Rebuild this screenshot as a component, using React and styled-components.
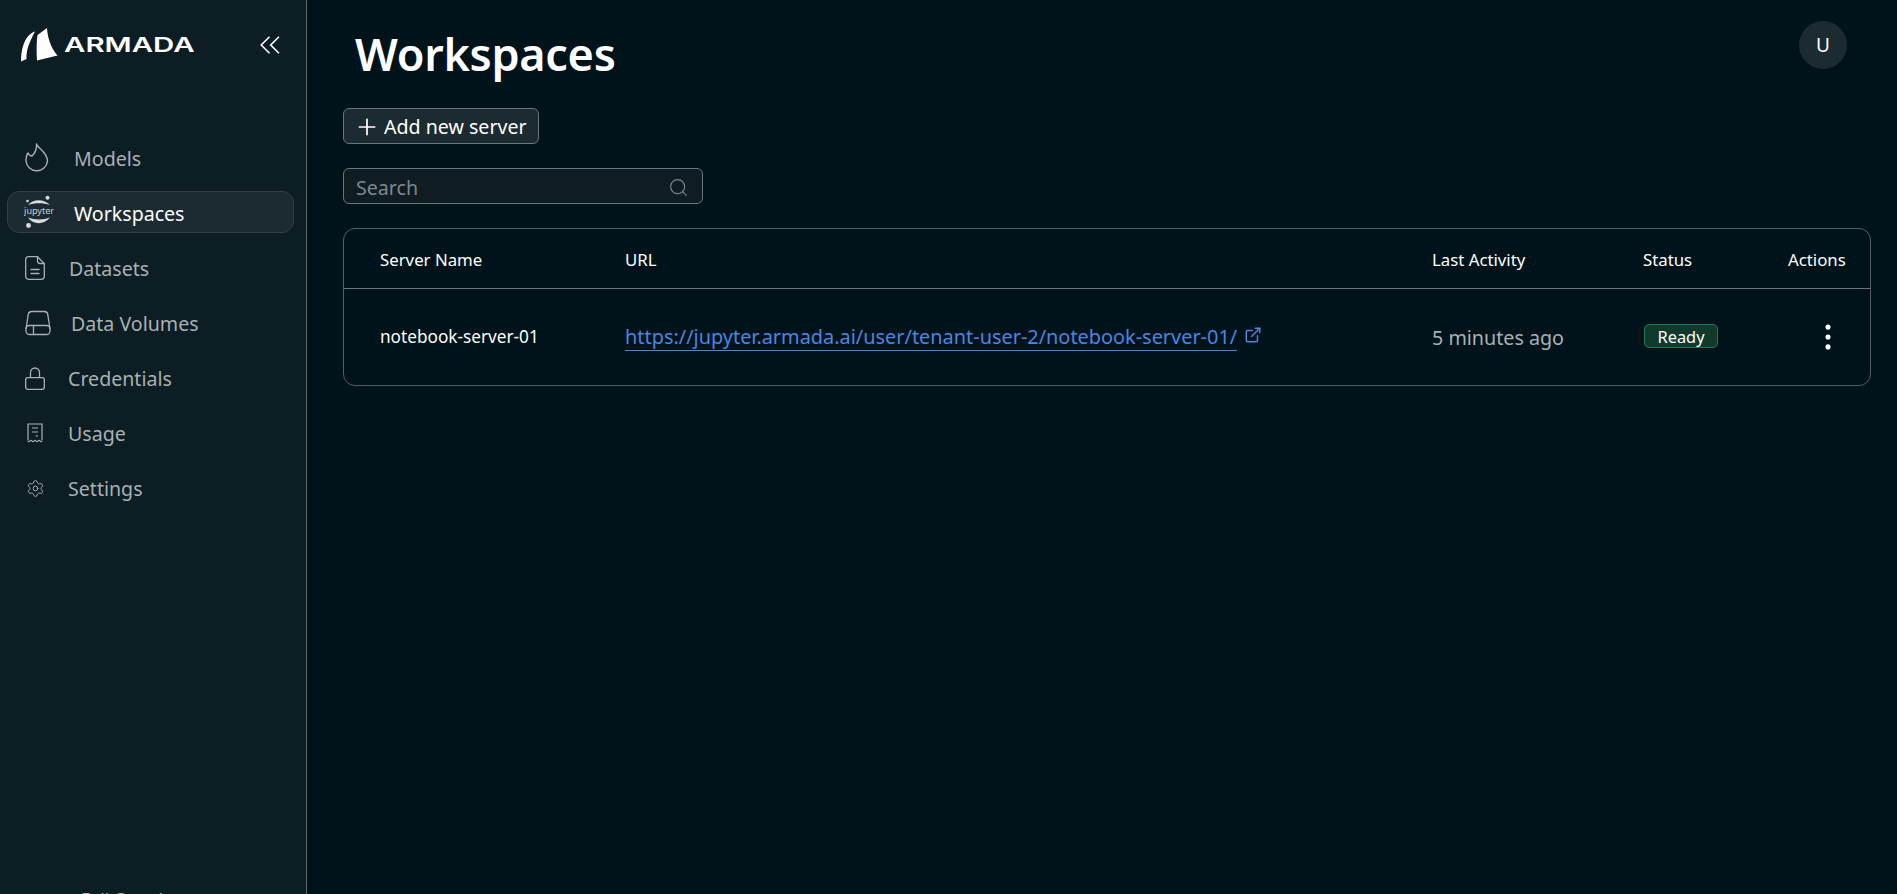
import React from 'react';
import styled, { createGlobalStyle } from 'styled-components';
import { Plus, Search, ExternalLink, Settings, EllipsisVertical } from 'lucide-react';

const Global = createGlobalStyle`
  html, body { margin: 0; padding: 0; height: 100%; background: #00131a; overflow: hidden; }
  * { box-sizing: border-box; }
  body { font-family: "Noto Sans", "Open Sans", sans-serif; }
`;

const Shell = styled.div`
  display: flex;
  width: 1897px;
  height: 894px;
  overflow: hidden;
  background: #00131a;
`;

const Sidebar = styled.aside`
  flex: 0 0 307px;
  height: 894px;
  background: #0d1d24;
  border-right: 1px solid #5c6669;
  display: flex;
  flex-direction: column;
  position: relative;
  overflow: hidden;
`;

const Brand = styled.div`
  height: 136px;
  padding: 28px 26px 0 20px;
  display: flex;
  align-items: flex-start;
  justify-content: space-between;
`;

const Logo = styled.div`
  display: flex;
  align-items: center;
  gap: 6px;
`;

const Wordmark = styled.span`
  display: inline-block;
  font-family: "Inter", sans-serif;
  font-weight: 600;
  font-size: 20px;
  line-height: 33px;
  color: #fff;
  transform: scaleX(1.47);
  transform-origin: left center;
`;

const Collapse = styled.button`
  all: unset;
  display: flex;
  color: #fff;
  margin-top: 8px;
`;

const Nav = styled.nav`
  display: flex;
  flex-direction: column;
  padding: 0 12px 0 7px;
  gap: 13px;
`;

const NavItem = styled.a`
  display: flex;
  align-items: center;
  height: 42px;
  padding: 2px 0 0 ${p => p.$pad}px;
  border-radius: 12px;
  border: 1px solid ${p => (p.$active ? '#333f44' : 'transparent')};
  background: ${p => (p.$active ? '#1c2a31' : 'transparent')};
  color: ${p => (p.$active ? '#fff' : '#a9b0b3')};
  font-size: 19.6px;
`;

const NavIcon = styled.span`
  flex: 0 0 ${p => p.$w}px;
  display: flex;
  align-items: center;
  color: #a9b0b3;
`;

const Footer = styled.div`
  position: absolute;
  left: 81px;
  top: 889px;
  font-size: 17px;
  line-height: 20px;
  color: #a9b8a8;
  white-space: nowrap;
`;

const Main = styled.main`
  flex: 1;
  min-width: 0;
  padding: 0 27px 0 36px;
  position: relative;
`;

const Title = styled.h1`
  margin: 0;
  padding: 21px 0 0 12px;
  height: 108px;
  font-size: 45px;
  line-height: 66px;
  font-weight: 600;
  color: #fff;
  letter-spacing: -0.3px;
`;

const Avatar = styled.div`
  position: absolute;
  top: 21px;
  right: 50px;
  width: 48px;
  height: 48px;
  border-radius: 50%;
  background: #1c2a31;
  color: #fff;
  font-size: 19px;
  display: flex;
  align-items: center;
  justify-content: center;
`;

const AddButton = styled.button`
  display: flex;
  align-items: center;
  gap: 4px;
  width: 196px;
  height: 36px;
  padding: 1px 0 0 10px;
  background: #1c2a31;
  border: 1px solid #6b7478;
  border-radius: 6px;
  color: #fff;
  font-family: inherit;
  font-size: 19.6px;
  white-space: nowrap;
`;

const SearchBox = styled.div`
  display: flex;
  align-items: center;
  justify-content: space-between;
  width: 360px;
  height: 36px;
  margin-top: 24px;
  padding: 2px 13px 0 12px;
  background: #0f1c22;
  border: 1px solid #6b7478;
  border-radius: 6px;
  color: #7f888c;
  font-size: 19.6px;
`;

const TableCard = styled.div`
  margin-top: 24px;
  width: 1528px;
  height: 158px;
  border: 1px solid #565f63;
  border-radius: 12px;
  overflow: hidden;
`;

const Row = styled.div`
  display: grid;
  grid-template-columns: 245px 807px 211px 145px 1fr;
  align-items: center;
  padding-left: 36px;
  height: ${p => p.$h}px;
  border-bottom: ${p => (p.$head ? '1px solid #6b7478' : 'none')};
`;

const HeadCell = styled.div`
  color: #fff;
  font-size: 16.8px;
  padding-top: 1px;
  white-space: nowrap;
`;

const NameCell = styled.div`
  color: #fff;
  font-size: 17.2px;
  margin-top: -2px;
  white-space: nowrap;
`;

const UrlCell = styled.div`
  display: flex;
  align-items: center;
  gap: 7px;
`;

const Url = styled.a`
  color: #4a86e0;
  font-size: 19.9px;
  line-height: 26px;
  border-bottom: 1px solid #4a86e0;
  white-space: nowrap;
`;

const LinkIcon = styled.span`
  display: flex;
  color: #4a86e0;
  margin-top: -4px;
`;

const ActivityCell = styled.div`
  color: #a9b0b3;
  font-size: 19.7px;
  white-space: nowrap;
`;

const StatusCell = styled.div`
  display: flex;
  padding-left: 1px;
  margin-top: -2px;
`;

const Badge = styled.span`
  display: inline-flex;
  align-items: center;
  justify-content: center;
  width: 74px;
  height: 24px;
  background: #11392c;
  border: 1px solid #267a50;
  border-radius: 5px;
  color: #fff;
  font-size: 16.4px;
`;

const ActionCell = styled.div`
  display: flex;
  padding-left: 23px;
  color: #fff;
`;

const ArmadaMark = () => (
  <svg width="38" height="34" viewBox="0 0 38 34" fill="#fff">
    <path d="M15 3.5 C6 6 1 19 1 33.5 L6.5 31 C6 22 9.5 14 15 3.5Z" />
    <path d="M27 0 C27.5 8 30 19 37.5 27.5 L17 32.5 C16.5 24 16.5 14 17.5 7 Z" />
  </svg>
);

const JupyterMark = () => (
  <svg width="30" height="36" viewBox="0 0 30 36">
    <g fill="#d8dcde">
      <circle cx="23.5" cy="2.8" r="2" />
      <circle cx="3.5" cy="6" r="1.3" />
      <circle cx="4.5" cy="30.5" r="2.4" />
      <path d="M4 10 C9 3.5 20 3.5 26 10 C20 7.7 10 7.7 4 10Z" />
      <path d="M4 22.5 C10 25 20 25 26 22.5 C20 30 9 30 4 22.5Z" />
    </g>
    <text x="15" y="18.5" textAnchor="middle" fontFamily="Noto Sans, sans-serif" fontSize="9" fill="#c9ced0">jupyter</text>
  </svg>
);

const FlameIcon = () => (
  <svg width="24" height="30" viewBox="0 0 24 30" fill="none" stroke="currentColor" strokeWidth="1.4" strokeLinejoin="round">
    <path d="M11.5 1 C12.5 5 22.5 9 22.5 18 A10.8 10.8 0 0 1 1 18 C1 15 1.5 12 3 10 C4 12 5.5 13 7 13 C10 10 12 6 11.5 1Z" />
  </svg>
);

const FileIcon = () => (
  <svg width="20" height="24" viewBox="0 0 20 24" fill="none" stroke="currentColor" strokeWidth="1.3" strokeLinejoin="round" strokeLinecap="round">
    <path d="M3.5 .7 H12.5 L19.3 7.5 V20 Q19.3 23.3 16 23.3 H4 Q.7 23.3 .7 20 V4 Q.7 .7 3.5 .7Z" />
    <path d="M12.5 .7 V5 Q12.5 7.5 15 7.5 H19.3" />
    <path d="M6 13.5 H14 M6 17.5 H14" />
  </svg>
);

const DriveIcon = () => (
  <svg width="26" height="26" viewBox="0 0 26 26" fill="none" stroke="currentColor" strokeWidth="1.3" strokeLinejoin="round">
    <path d="M1 19 L3.2 4.6 Q3.6 1.5 6.5 1.5 H19.5 Q22.4 1.5 22.8 4.6 L25 19" />
    <rect x="1" y="15.5" width="24" height="9" rx="3.5" />
    <path d="M8.5 15.5 V24.5" />
  </svg>
);

const LockIcon = () => (
  <svg width="20" height="23" viewBox="0 0 20 23" fill="none" stroke="currentColor" strokeWidth="1.3">
    <rect x=".7" y="10.7" width="18.6" height="11.6" rx="2" />
    <path d="M5.5 10.7 V5.5 a4.5 4.5 0 0 1 9 0 V10.7" />
  </svg>
);

const ReceiptIcon = () => (
  <svg width="16" height="20" viewBox="0 0 16 20" fill="none" stroke="currentColor" strokeWidth="1.2">
    <path d="M1 17.5 V1 H15 V17.5" />
    <path d="M1 18 q1 1.4 2 0 t2 0 t2 0 t2 0 t2 0 t2 0 t2 0" />
    <path d="M5 5 H11 M5 9 H11 M8.5 13 H11" />
  </svg>
);

const CollapseIcon = () => (
  <svg width="20" height="18" viewBox="0 0 20 18" fill="none" stroke="currentColor" strokeWidth="1.6">
    <path d="M9.5 .8 L1.2 9 L9.5 17.2 M19 .8 L10.7 9 L19 17.2" />
  </svg>
);

const navItems = [
  { label: 'Models', icon: <FlameIcon />, w: 49, pad: 17 },
  { label: 'Workspaces', icon: <JupyterMark />, w: 50, pad: 16, active: true },
  { label: 'Datasets', icon: <FileIcon />, w: 44, pad: 17 },
  { label: 'Data Volumes', icon: <DriveIcon />, w: 46, pad: 17 },
  { label: 'Credentials', icon: <LockIcon />, w: 43, pad: 17 },
  { label: 'Usage', icon: <ReceiptIcon />, w: 41, pad: 19 },
  { label: 'Settings', icon: <Settings size={19} strokeWidth={1.2} />, w: 42, pad: 18 },
];

export default function App() {
  return (
    <Shell>
      <Global />
      <Sidebar>
        <Brand>
          <Logo>
            <ArmadaMark />
            <Wordmark>ARMADA</Wordmark>
          </Logo>
          <Collapse aria-label="Collapse sidebar">
            <CollapseIcon />
          </Collapse>
        </Brand>
        <Nav>
          {navItems.map(item => (
            <NavItem key={item.label} $active={item.active} $pad={item.pad}>
              <NavIcon $w={item.w}>{item.icon}</NavIcon>
              {item.label}
            </NavItem>
          ))}
        </Nav>
        <Footer>Full Guard</Footer>
      </Sidebar>
      <Main>
        <Title>Workspaces</Title>
        <Avatar>U</Avatar>
        <AddButton>
          <Plus size={26} strokeWidth={1.6} />
          Add new server
        </AddButton>
        <SearchBox>
          Search
          <Search size={21} strokeWidth={1.3} />
        </SearchBox>
        <TableCard>
          <Row $head $h={60}>
            <HeadCell>Server Name</HeadCell>
            <HeadCell>URL</HeadCell>
            <HeadCell>Last Activity</HeadCell>
            <HeadCell>Status</HeadCell>
            <HeadCell>Actions</HeadCell>
          </Row>
          <Row $h={96}>
            <NameCell>notebook-server-01</NameCell>
            <UrlCell>
              <Url>https://jupyter.armada.ai/user/tenant-user-2/notebook-server-01/</Url>
              <LinkIcon><ExternalLink size={18} strokeWidth={2} /></LinkIcon>
            </UrlCell>
            <ActivityCell>5 minutes ago</ActivityCell>
            <StatusCell><Badge>Ready</Badge></StatusCell>
            <ActionCell><EllipsisVertical size={34} strokeWidth={1.6} /></ActionCell>
          </Row>
        </TableCard>
      </Main>
    </Shell>
  );
}
